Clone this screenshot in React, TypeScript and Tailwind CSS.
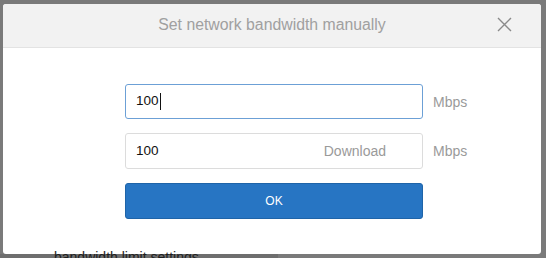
export default function App() {
  const font = { fontFamily: '"Liberation Sans", Arial, sans-serif' }
  return (
    <div className="relative w-[546px] h-[258px] overflow-hidden bg-[#7a7a7a]" style={font}>
      <div className="absolute left-0 bottom-0 w-[278px] h-[4px] bg-[#6e6e6e]" />
      <div className="absolute left-[54px] top-[249px] text-[14px] leading-[16px] text-[#1e1e1e] z-10">
        bandwidth limit settings
      </div>
      <div className="absolute left-[3px] top-[4px] w-[538px] h-[250px] bg-white rounded-[3px] overflow-hidden">
        <div className="relative h-[44px] bg-[#f2f2f2] border-b border-[#e3e3e3] flex items-center justify-center">
          <span className="text-[15.8px] text-[#a0a0a0] -mt-[2px]">Set network bandwidth manually</span>
          <svg
            className="absolute right-[29px] top-[13px]"
            width="15"
            height="15"
            viewBox="0 0 15 15"
            fill="none"
            stroke="#8a8a8a"
            strokeWidth="1.4"
          >
            <path d="M1 1 L14 14 M14 1 L1 14" />
          </svg>
        </div>
        <div className="pl-[122px] pt-[36px] flex flex-col gap-[14px]">
          <div className="flex items-center gap-[10px]">
            <div className="w-[298px] h-[35px] border border-[#6ca0d6] rounded-[3px] flex items-center pl-[10px] text-[13.5px] text-[#111]">
              100<span className="inline-block w-px h-[17px] bg-[#111] ml-px" />
            </div>
            <span className="text-[14px] text-[#9a9a9a] mt-[1px]">Mbps</span>
          </div>
          <div className="flex items-center gap-[10px]">
            <div className="w-[298px] h-[36px] border border-[#dcdcdc] rounded-[3px] flex items-center justify-between pl-[10px] pr-[36px] text-[13.5px]">
              <span className="text-[#111]">100</span>
              <span className="text-[14px] text-[#9a9a9a]">Download</span>
            </div>
            <span className="text-[14px] text-[#9a9a9a] mt-[1px]">Mbps</span>
          </div>
          <button className="w-[298px] h-[36px] bg-[#2775c3] border border-[#1f64a8] rounded-[3px] text-white text-[12px] flex items-center justify-center">
            OK
          </button>
        </div>
      </div>
    </div>
  )
}
